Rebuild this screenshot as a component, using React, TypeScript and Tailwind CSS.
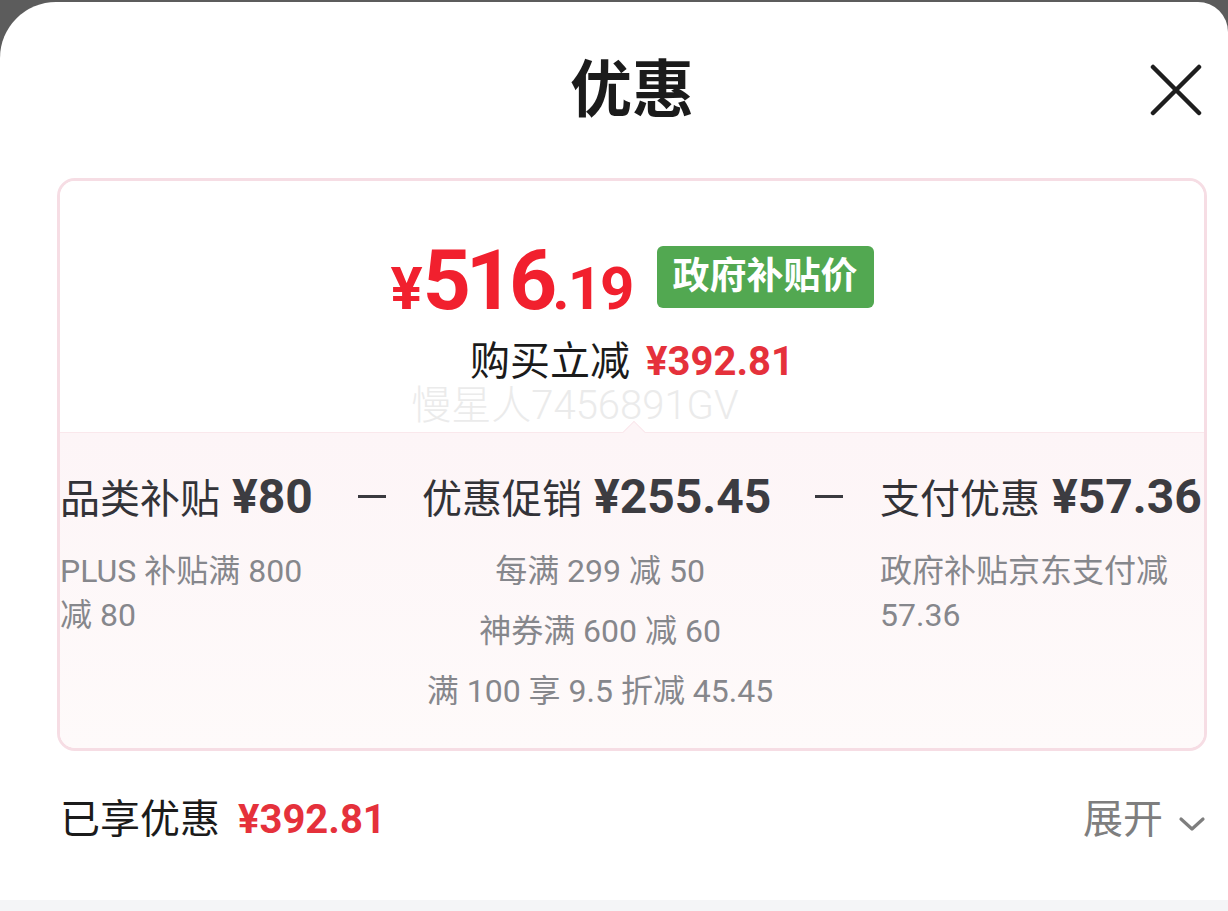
const font = { fontFamily: "Roboto, 'Noto Sans CJK SC', sans-serif" };

type Column = {
  label: string;
  amount: string;
  lines: string[];
  center?: boolean;
  width: string;
};

const columns: Column[] = [
  { label: "品类补贴", amount: "¥80", lines: ["PLUS 补贴满 800 减 80"], width: "w-[262px]" },
  {
    label: "优惠促销",
    amount: "¥255.45",
    lines: ["每满 299 减 50", "神券满 600 减 60", "满 100 享 9.5 折减 45.45"],
    center: true,
    width: "w-[356px]",
  },
  { label: "支付优惠", amount: "¥57.36", lines: ["政府补贴京东支付减 57.36"], width: "w-[326px]" },
];

function Minus() {
  return <div className="mt-[22px] h-[3px] w-[28px] shrink-0 bg-[#3a3a3f]" />;
}

function CloseIcon() {
  return (
    <svg viewBox="0 0 52 52" className="h-[52px] w-[52px]" fill="none" stroke="#1e1e1e" strokeWidth="4.5" strokeLinecap="round">
      <path d="M3 3 L49 49 M49 3 L3 49" />
    </svg>
  );
}

function Chevron() {
  return (
    <svg viewBox="0 0 28 16" className="ml-[15px] mt-[8px] h-[16px] w-[28px]" fill="none" stroke="#7e7e7e" strokeWidth="3.2" strokeLinecap="round" strokeLinejoin="round">
      <path d="M3 3 L14 13 L25 3" />
    </svg>
  );
}

function DiscountColumn({ col }: { col: Column }) {
  return (
    <div className={`${col.width} shrink-0`}>
      <div className="flex items-baseline whitespace-nowrap leading-[48px]">
        <span className="text-[40px] text-[#333338]">{col.label}</span>
        <span className="ml-[12px] text-[48px] font-bold text-[#3c3c41]">{col.amount}</span>
      </div>
      {col.center ? (
        <div className="mt-[25px] flex flex-col items-center gap-[16px] text-[32px] leading-[44px] text-[#86878c]">
          {col.lines.map((l) => (
            <p key={l} className="whitespace-nowrap">
              {l}
            </p>
          ))}
        </div>
      ) : (
        <p className="mt-[25px] text-[32px] leading-[44px] text-[#86878c]">{col.lines[0]}</p>
      )}
    </div>
  );
}

export default function App() {
  return (
    <div className="h-[911px] w-[1228px] overflow-hidden bg-[#5c5c5c] pt-[2px]" style={font}>
      <div className="flex h-full flex-col rounded-tl-[56px] rounded-tr-[30px] bg-white">
        <header className="grid h-[176px] grid-cols-[52px_1fr_52px] items-center pl-[62px] pr-[26px]">
          <div />
          <h1 className="text-center text-[62px] font-bold text-[#1b1b1b]">优惠</h1>
          <CloseIcon />
        </header>

        <section className="ml-[57px] mr-[21px] h-[573px] overflow-hidden rounded-[18px] border-[3px] border-[#f6dde4]">
          <div className="flex h-[251px] flex-col items-center bg-white pt-[58px]">
            <div className="flex items-center">
              <div className="flex items-baseline font-bold leading-none text-[#f1202e]">
                <span className="text-[60px]">¥</span>
                <span className="text-[84px] tracking-[-5px]">516</span>
                <span className="text-[60px] tracking-[-2px]">.19</span>
              </div>
              <span className="ml-[24px] mt-[-8px] rounded-[6px] bg-[#52a851] px-[16px] py-[6px] text-[37px] font-bold leading-[50px] text-white">
                政府补贴价
              </span>
            </div>
            <div className="mt-[14px] flex items-baseline leading-[50px]">
              <span className="text-[40px] text-[#1b1b1b]">购买立减</span>
              <span className="ml-[16px] text-[40px] font-bold text-[#e5313b]">¥392.81</span>
            </div>
            <div className="-ml-[114px] mt-[-4px] text-[40px] font-light leading-[46px] text-[#ebebeb]">慢星人7456891GV</div>
          </div>

          <div className="relative flex h-[316px] items-start border-t border-[#fae8ec] bg-gradient-to-b from-[#fdf5f7] to-[#fefafa] pt-[40px] pr-[4px]">
            <div className="absolute left-1/2 top-[-9px] h-[16px] w-[16px] -translate-x-[6px] rotate-45 border-l border-t border-[#fae8ec] bg-[#fdf5f7]" />
            <DiscountColumn col={columns[0]} />
            <div className="ml-[36px] mr-[36px]">
              <Minus />
            </div>
            <DiscountColumn col={columns[1]} />
            <div className="ml-[37px] mr-[37px]">
              <Minus />
            </div>
            <DiscountColumn col={columns[2]} />
          </div>
        </section>

        <div className="flex flex-1 items-center justify-between pb-[12px] pl-[60px] pr-[22px]">
          <div className="flex items-baseline leading-[50px]">
            <span className="text-[40px] text-[#1b1b1b]">已享优惠</span>
            <span className="ml-[18px] text-[40px] font-bold text-[#e5313b]">¥392.81</span>
          </div>
          <div className="flex items-center text-[40px] text-[#7e7e7e]">
            <span>展开</span>
            <Chevron />
          </div>
        </div>
        <div className="h-[11px] bg-[#f4f5f7]" />
      </div>
    </div>
  );
}
